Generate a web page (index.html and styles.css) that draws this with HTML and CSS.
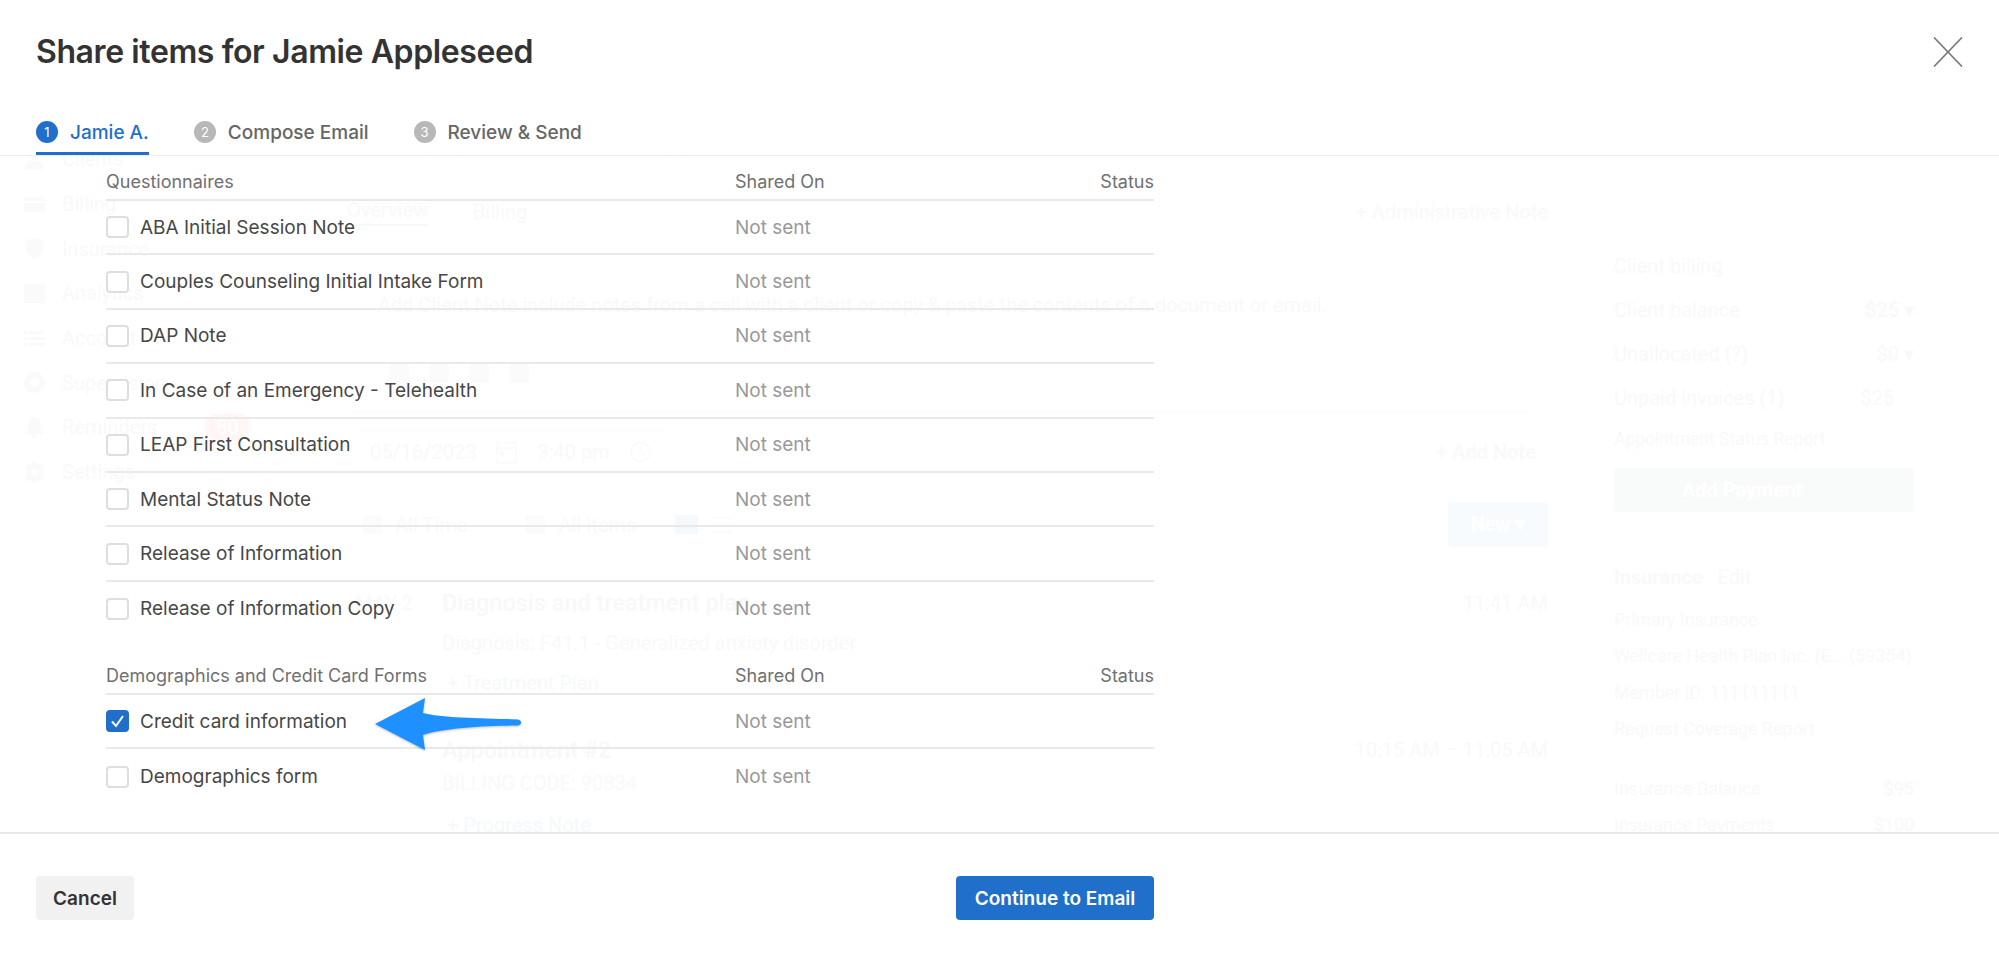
FILE: index.html
```html
<!DOCTYPE html>
<html lang="en">
<head>
<meta charset="utf-8">
<title>Share items for Jamie Appleseed</title>
<link rel="stylesheet" href="styles.css">
</head>
<body>
<div class="ghost" aria-hidden="true">
  <nav class="g-side">
    <div class="g-nav"><svg class="g-svg" viewBox="0 0 21 21"><circle cx="10.500" cy="6" r="4.500"/><path d="M1 20c0-6 4-8 9.500-8s9.500 2 9.500 8z"/></svg>Clients</div>
    <div class="g-nav"><svg class="g-svg" viewBox="0 0 21 21"><path d="M0 3h21v4H0zM0 9h21v9H0z"/></svg>Billing</div>
    <div class="g-nav"><svg class="g-svg" viewBox="0 0 21 21"><path d="M10.500 0 19 3v8c0 5-4 8-8.500 10C6 19 2 16 2 11V3z"/></svg>Insurance</div>
    <div class="g-nav"><svg class="g-svg" viewBox="0 0 21 21"><path d="M0 1h21v19H0z"/></svg>Analytics</div>
    <div class="g-nav"><svg class="g-svg" viewBox="0 0 21 21"><path d="M0 3h3v3H0zM5 3h16v3H5zM0 9h3v3H0zM5 9h16v3H5zM0 15h3v3H0zM5 15h16v3H5z"/></svg>Account</div>
    <div class="g-nav"><svg class="g-svg" viewBox="0 0 21 21"><path fill-rule="evenodd" d="M10.500 0a10.500 10.500 0 1 0 .01 0zM10.500 6a4.500 4.500 0 1 1-.01 0z"/></svg>Supervision</div>
    <div class="g-nav"><svg class="g-svg" viewBox="0 0 21 21"><path d="M10.500 0c4 0 6 3 6 7v6l3 4H1.500l3-4V7c0-4 2-7 6-7zM8 18h5l-2.500 3z"/></svg>Reminders<b class="g-badge">80</b></div>
    <div class="g-nav"><svg class="g-svg" viewBox="0 0 21 21"><path fill-rule="evenodd" d="M8 0h5l1 3 3-1 3 4-2 3v3l2 3-3 4-3-1-1 3H8l-1-3-3 1-3-4 2-3V9L1 6l3-4 3 1zM10.500 7a3.500 3.500 0 1 0 .01 0z"/></svg>Settings</div>
  </nav>
  <section class="g-main">
    <div class="g-row g-appt"><span>Adult &nbsp; (555) 555-5555 &nbsp; Schedule appointment | Edit</span></div>
    <div class="g-row g-tabs">
      <span class="g-tab-on">Overview</span><span class="g-tab">Billing</span>
      <span class="g-end">+ Administrative Note</span>
    </div>
    <div class="g-hint">Add Client Note include notes from a call with a client or copy &amp; paste the contents of a document or email.</div>
    <div class="g-tools"><i class="g-ico small"></i><i class="g-ico small"></i><i class="g-ico small"></i><i class="g-ico small"></i></div>
    <div class="g-row g-date">
      <div class="g-date-box">
        <span>05/16/2023</span>
        <svg class="g-line-ico" viewBox="0 0 21 24"><path d="M1 3h19v20H1zM1 8h19M5 13h3v3H5z"/></svg>
        <span>3:40 pm</span>
        <svg class="g-line-ico" viewBox="0 0 22 24"><circle cx="11" cy="12" r="10"/><path d="M11 5v7l5 4"/></svg>
      </div>
      <span class="g-end g-bold">+ Add Note</span>
    </div>
    <div class="g-row g-filter">
      <i class="g-ico small"></i><span>All Time</span><i class="g-ico small spaced"></i><span>All Items</span>
      <i class="g-grid"></i>
      <svg class="g-line-ico" viewBox="0 0 22 24"><path d="M0 5h22M0 12h22M0 19h22"/></svg>
      <span class="g-new">New ▾</span>
    </div>
    <div class="g-block">
      <span class="g-month">MAY 2</span>
      <div class="g-col">
        <h3>Diagnosis and treatment plan</h3>
        <p>Diagnosis: F41.1 - Generalized anxiety disorder</p>
        <p class="g-link">+ Treatment Plan</p>
      </div>
      <span class="g-end">11:41 AM</span>
    </div>
    <div class="g-block second">
      <div class="g-col">
        <h3>Appointment #2</h3>
        <p>BILLING CODE: 90834</p>
        <p class="g-link">+ Progress Note</p>
      </div>
      <span class="g-end">10:15 AM – 11:05 AM</span>
    </div>
  </section>
  <aside class="g-right">
    <div class="g-line"><span>Client billing</span></div>
    <div class="g-line"><span>Client balance</span><span class="g-red">$25 ▾</span></div>
    <div class="g-line"><span>Unallocated (?)</span><span>$0 ▾</span></div>
    <div class="g-line"><span>Unpaid invoices (1)</span><span>$25 &nbsp;&nbsp;&nbsp;</span></div>
    <div class="g-report">Appointment Status Report</div>
    <div class="g-pay">Add Payment</div>
    <div class="g-line g-ins"><span><b>Insurance</b> &nbsp;&nbsp;Edit</span></div>
    <div class="g-text">Primary Insurance</div>
    <div class="g-text">Wellcare Health Plan Inc. (E... (59354)</div>
    <div class="g-text">Member ID: 111111111</div>
    <div class="g-text">Request Coverage Report</div>
    <div class="g-line g-bal"><span>Insurance Balance</span><span class="g-red">$95</span></div>
    <div class="g-text g-split"><span>Insurance Payments</span><span>$100</span></div>
  </aside>
</div>

<div class="modal">
  <header class="head">
    <div class="title-row">
      <h1 class="title">Share items for Jamie Appleseed</h1>
      <svg class="close" viewBox="0 0 30 30" width="30" height="30" aria-label="Close"><path d="M1 0.5 29 29.5M29 0.5 1 29.5"/></svg>
    </div>
    <div class="tabs">
      <div class="tab active"><span class="num">1</span>Jamie A.</div>
      <div class="tab"><span class="num">2</span>Compose Email</div>
      <div class="tab"><span class="num">3</span>Review &amp; Send</div>
    </div>
  </header>

  <main class="body">
    <section class="group">
      <div class="row thead"><span>Questionnaires</span><span>Shared On</span><span>Status</span></div>
      <div class="row"><label class="item"><span class="box"></span>ABA Initial Session Note</label><span class="sent">Not sent</span><span></span></div>
      <div class="row"><label class="item"><span class="box"></span>Couples Counseling Initial Intake Form</label><span class="sent">Not sent</span><span></span></div>
      <div class="row"><label class="item"><span class="box"></span>DAP Note</label><span class="sent">Not sent</span><span></span></div>
      <div class="row"><label class="item"><span class="box"></span>In Case of an Emergency - Telehealth</label><span class="sent">Not sent</span><span></span></div>
      <div class="row"><label class="item"><span class="box"></span>LEAP First Consultation</label><span class="sent">Not sent</span><span></span></div>
      <div class="row"><label class="item"><span class="box"></span>Mental Status Note</label><span class="sent">Not sent</span><span></span></div>
      <div class="row"><label class="item"><span class="box"></span>Release of Information</label><span class="sent">Not sent</span><span></span></div>
      <div class="row"><label class="item"><span class="box"></span>Release of Information Copy</label><span class="sent">Not sent</span><span></span></div>
    </section>
    <section class="group">
      <div class="row thead"><span>Demographics and Credit Card Forms</span><span>Shared On</span><span>Status</span></div>
      <div class="row marked">
        <label class="item"><span class="box checked"><svg viewBox="0 0 23 22" width="23" height="22"><path d="M6 11.500 10 16 17 6"/></svg></span>Credit card information</label><span class="sent">Not sent</span><span></span>
        <svg class="arrow" viewBox="0 0 156 62" width="156" height="62" aria-hidden="true"><path d="M5 31 55 5 53 20C70 25 110 25 148 26.500C152 27 152 32 148 32.500C110 33 75 35 53 42L55 57Z"/></svg>
      </div>
      <div class="row"><label class="item"><span class="box"></span>Demographics form</label><span class="sent">Not sent</span><span></span></div>
    </section>
  </main>

  <footer class="foot">
    <button class="btn cancel" type="button">Cancel</button>
    <button class="btn primary" type="button">Continue to Email</button>
  </footer>
</div>
</body>
</html>
```
FILE: styles.css
```css
* { box-sizing: border-box; }
html, body { margin: 0; height: 100%; }
body {
  position: relative;
  width: 1999px;
  height: 959px;
  overflow: hidden;
  background: #fff;
  font-family: Inter, "Liberation Sans", sans-serif;
  color: #444;
}

/* Modal */
.modal {
  position: relative;
  z-index: 1;
  display: flex;
  flex-direction: column;
  height: 959px;
}
.head {
  height: 156px;
  background: #fff;
  border-bottom: 1px solid #eeeeee;
  padding: 0 36px;
}
.title-row {
  display: flex;
  justify-content: space-between;
  align-items: center;
  height: 103px;
}
.title {
  margin: 0;
  font-size: 32px;
  line-height: 38px;
  font-weight: 600;
  color: #333;
  letter-spacing: -0.4px;
}
.close path { fill: none; stroke: #777; stroke-width: 1.6; }
.tabs { display: flex; gap: 45px; height: 52px; }
.tab {
  display: flex;
  align-items: center;
  gap: 12px;
  height: 52px;
  padding-top: 9px;
  font-size: 19px;
  font-weight: 500;
  color: #666;
  border-bottom: 3px solid transparent;
}
.tab.active { color: #1f6fcb; border-bottom-color: #1f6fcb; }
.num {
  display: flex;
  align-items: center;
  justify-content: center;
  width: 22px;
  height: 22px;
  border-radius: 50%;
  background: #b8b8b8;
  color: #fff;
  font-size: 13px;
  font-weight: 400;
}
.active .num { background: #1f6fcb; }

.body { flex: 1; padding: 0 845px 0 106px; }
.group + .group { margin-top: 13.800px; }
.row {
  display: grid;
  grid-template-columns: 629px 1fr auto;
  align-items: center;
  height: 54.400px;
  border-bottom: 2px solid #e9e9e9;
  font-size: 19px;
}
.group .row:last-child { border-bottom: 0; }
.thead {
  height: 45px;
  align-items: end;
  padding-bottom: 7px;
  font-size: 18px;
  line-height: 20px;
  color: #707070;
}
.item { display: flex; align-items: center; gap: 11px; color: #474747; }
.box {
  display: block;
  width: 23px;
  height: 22px;
  border: 2px solid #dedede;
  border-radius: 4px;
  background: #fff;
}
.box.checked { border: 0; background: #1f6fcb; }
.box svg { display: block; }
.box path { fill: none; stroke: #fff; stroke-width: 2; }
.sent { color: #999; }
.marked { position: relative; }
.arrow {
  position: absolute;
  left: 264px;
  top: -2px;
  filter: drop-shadow(0 1px 1px rgba(0, 0, 0, .25));
}
.arrow path { fill: #1e90ff; }

.foot {
  display: flex;
  justify-content: space-between;
  align-items: flex-start;
  height: 127px;
  padding: 42px 845px 0 36px;
  background: #fff;
  border-top: 2px solid #e8e8e8;
}
.btn {
  height: 44px;
  border: 0;
  border-radius: 4px;
  font: 600 19px Inter, "Liberation Sans", sans-serif;
}
.cancel { width: 98px; background: #f1f1f1; color: #333; }
.primary { width: 198px; background: #1f6fcb; color: #fff; }

/* Faded page behind the modal */
.ghost {
  position: absolute;
  inset: 0;
  z-index: 0;
  display: flex;
  font-family: Roboto, "Liberation Sans", sans-serif;
  font-size: 20px;
  color: #f9f9fa;
}
.g-side { width: 347px; padding: 137px 0 0 24px; flex: none; }
.g-nav {
  display: flex;
  align-items: center;
  gap: 17px;
  width: 226px;
  height: 44.700px;
}
.g-svg { width: 21px; height: 21px; flex: none; fill: #fafafb; }
.g-line-ico { width: 21px; height: 24px; flex: none; fill: none; stroke: #fafafb; stroke-width: 1.5; }
.g-ico {
  display: block;
  flex: none;
  width: 21px;
  height: 21px;
  border-radius: 3px;
  background: #fbfbfc;
}
.g-ico.small { width: 19px; height: 19px; }
.g-ico.spaced { margin-left: 46px; }
.g-badge {
  margin-left: auto;
  width: 45px;
  height: 28px;
  border-radius: 14px;
  background: #fff6f5;
  color: #fff;
  text-align: center;
  font-weight: 400;
  line-height: 28px;
}
.g-main { width: 1201px; flex: none; }
.g-row { display: flex; align-items: center; }
.g-end { margin-left: auto; }
.g-appt { height: 20px; margin-top: 136px; padding-left: 10px; }
.g-tabs { height: 44px; margin-top: 34px; gap: 45px; }
.g-tab-on { padding-bottom: 2px; border-bottom: 2px solid #f5f8fc; color: #f7f9fb; }
.g-hint { margin-top: 59px; height: 24px; padding-left: 31px; line-height: 24px; }
.g-tools {
  display: flex;
  gap: 21px;
  height: 49px;
  margin: 47px 16px 0 0;
  padding-left: 43px;
  border-bottom: 1px solid #fbfbfb;
}
.g-date { height: 43px; margin-top: 17px; }
.g-date-box {
  display: flex;
  align-items: center;
  gap: 20px;
  width: 304px;
  height: 43px;
  margin-left: 13px;
  padding-left: 10px;
  border-top: 1px solid #fbfbfb;
  border-bottom: 1px solid #fbfbfb;
}
.g-bold { font-weight: 500; padding-right: 12px; }
.g-filter { height: 45px; margin-top: 29px; padding-left: 16px; gap: 13px; }
.g-grid {
  display: block;
  width: 23px;
  height: 19px;
  margin-left: 26px;
  background: #f5f9fe;
}
.g-new {
  margin-left: auto;
  width: 100px;
  height: 45px;
  border-radius: 4px;
  background: #f7fbfe;
  color: #fff;
  text-align: center;
  font-weight: 700;
  line-height: 45px;
}
.g-block { display: flex; margin-top: 43px; line-height: 26px; }
.g-block.second { padding-left: 95px; }
.g-month { width: 95px; padding-left: 8px; }
.g-col h3 { margin: 0; font-size: 23.500px; line-height: 26px; font-weight: 500; color: #f8f8f9; }
.g-col p { margin: 16px 0 0; line-height: 22px; }
.g-col .g-link { margin-top: 18px; padding-left: 5px; color: #f6f9fc; }
.second .g-col p { margin-top: 9px; }
.second .g-col .g-link { margin-top: 20px; }
.g-right { width: 300px; margin-left: 66px; padding-top: 254px; flex: none; }
.g-line { display: flex; justify-content: space-between; height: 44px; line-height: 24px; }
.g-red { color: #fdf6f6; }
.g-report { height: 22px; margin-top: -2px; font-size: 17.500px; line-height: 22px; }
.g-pay {
  height: 44px;
  margin-top: 18px;
  border-radius: 4px;
  background: #f9fbfb;
  color: #fff;
  padding-right: 44px;
  text-align: center;
  font-weight: 700;
  line-height: 44px;
}
.g-ins { margin-top: 53px; height: 43px; }
.g-text { height: 36.400px; line-height: 24px; font-size: 18px; white-space: nowrap; letter-spacing: -0.1px; }
.g-bal { margin-top: 23px; height: 36px; font-size: 18px; }
.g-split { display: flex; justify-content: space-between; }
```
